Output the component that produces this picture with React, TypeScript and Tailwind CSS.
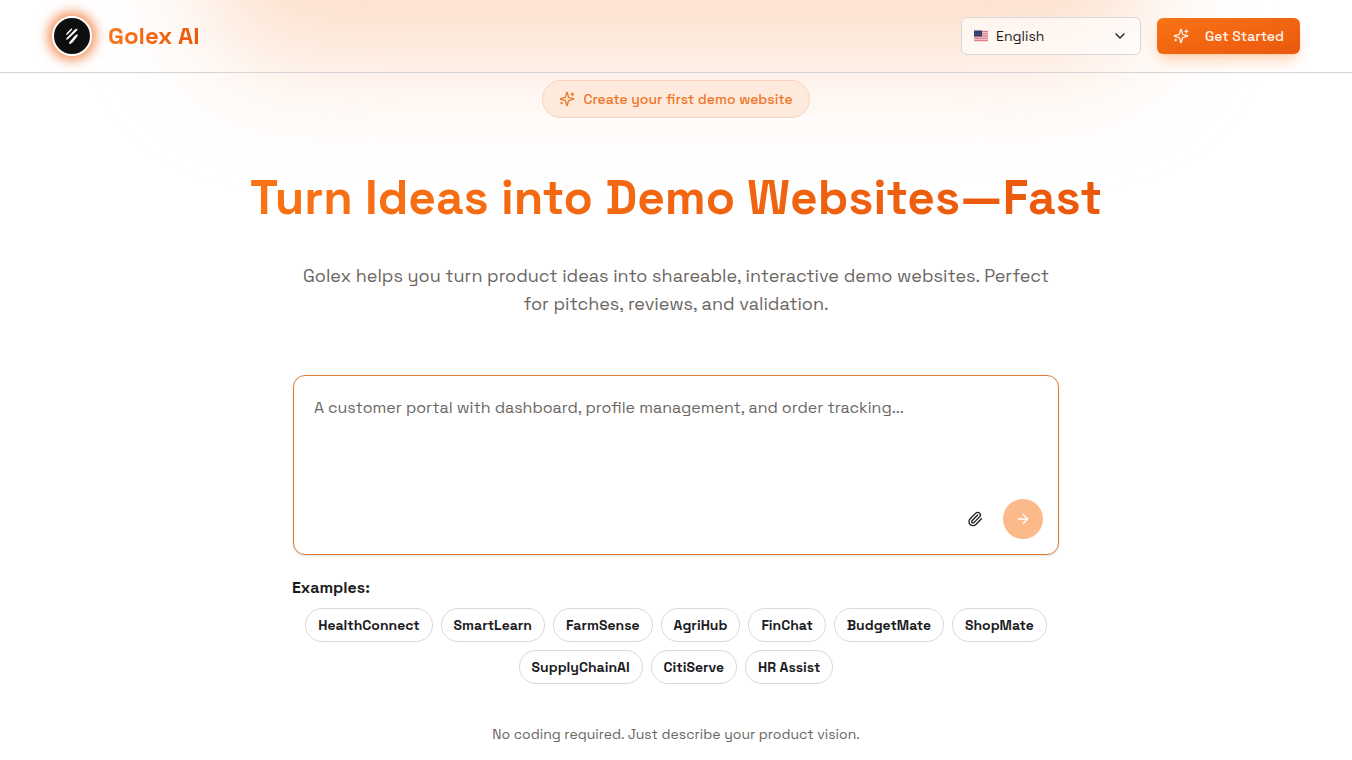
import { useState } from "react";
import { ArrowRight, ChevronDown, Paperclip } from "lucide-react";

const EXAMPLES = [
  "HealthConnect",
  "SmartLearn",
  "FarmSense",
  "AgriHub",
  "FinChat",
  "BudgetMate",
  "ShopMate",
  "SupplyChainAI",
  "CitiServe",
  "HR Assist",
];

function SparkleIcon() {
  return (
    <svg
      className="size-4 shrink-0"
      viewBox="0 0 24 24"
      fill="none"
      stroke="currentColor"
      strokeWidth={2}
      strokeLinecap="round"
      strokeLinejoin="round"
      aria-hidden="true">
      <path d="M9.937 15.5A2 2 0 0 0 8.5 14.063l-6.135-1.582a.5.5 0 0 1 0-.962L8.5 9.936A2 2 0 0 0 9.937 8.5l1.582-6.135a.5.5 0 0 1 .963 0L14.063 8.5A2 2 0 0 0 15.5 9.937l6.135 1.581a.5.5 0 0 1 0 .964L15.5 14.063a2 2 0 0 0-1.437 1.437l-1.582 6.135a.5.5 0 0 1-.963 0z" />
      <path d="M20 3v4M22 5h-4M4 17v2M5 18H3" />
    </svg>
  );
}

function Logo() {
  return (
    <a href="#" className="flex items-center gap-4">
      <span className="flex size-10 items-center justify-center rounded-full border-2 border-white bg-[#0d0f0f] shadow-[0_0_12px_4px_rgba(240,105,30,0.75)]">
        <svg className="size-5 shrink-0" viewBox="0 0 20 20" fill="#fff" aria-hidden="true">
          <path d="M4 8.800c.1-.8.4-1.200.9-1.800l3.300-3.600c.6-.6 1-.8 2-.8-.1.800-.4 1.200-.9 1.800L6 8c-.6.600-1 .8-2 .8z" />
          <path d="M4 13.600c.1-.8.4-1.300.9-1.800l7.500-7.800c.8-.8 1.500-1 3.200-1-.2.900-.5 1.400-1.100 2l-8.200 7.700c-.7.700-1.200.9-2.300.9z" />
          <path d="M7 17.800c.2-1.300.6-1.900 1.300-2.700l4.700-5.400c.8-.9 1.500-1.200 2.900-1.200-.2 1-.5 1.600-1.100 2.400l-3.500 4.600c-1.200 1.600-2.100 2.300-4.300 2.300z" />
        </svg>
      </span>
      <span className="bg-gradient-to-r from-[#f97316] to-[#ea580c] bg-clip-text text-2xl font-bold text-transparent">
        Golex AI
      </span>
    </a>
  );
}

function UsFlag() {
  return (
    <svg className="h-3 w-3.5 shrink-0" viewBox="0 0 14 12" aria-hidden="true">
      <rect y=".5" width="14" height="11" rx=".5" fill="#f3d3d6" />
      <path
        d="M0 1.500h14M0 3.300h14M0 5.100h14M0 6.900h14M0 8.700h14M0 10.600h14"
        stroke="#dd6f7a"
        strokeWidth=".9"
      />
      <rect y=".5" width="8" height="6" fill="#303a6b" />
      <path
        d="M1 2h6M1 3.500h6M1 5h6"
        stroke="#8088ae"
        strokeWidth=".5"
        strokeDasharray=".6 1.200"
      />
    </svg>
  );
}

function Header() {
  return (
    <header className="relative border-b border-[#d4d4d8]">
      <div className="mx-auto flex h-18 max-w-7xl items-center justify-between px-4">
        <Logo />
        <div className="flex items-center gap-4">
          <div className="flex h-9.5 w-45 items-center rounded-md border border-[#d9d7d8] bg-white/60 px-3">
            <UsFlag />
            <select
              aria-label="Language"
              defaultValue="en"
              className="w-full appearance-none bg-transparent pl-2 text-sm text-[#1c1c1f] outline-none">
              <option value="en">English</option>
            </select>
            <ChevronDown className="pointer-events-none size-4 shrink-0 text-[#1c1c1f]" />
          </div>
          <button
            type="button"
            className="flex h-9 items-center gap-4 rounded-md bg-gradient-to-br from-[#f97316] to-[#ea580c] px-4 text-sm font-medium text-[#fff3ea] shadow-lg shadow-orange-500/25">
            <SparkleIcon />
            Get Started
          </button>
        </div>
      </div>
    </header>
  );
}

function PromptBox() {
  const [prompt, setPrompt] = useState("");

  return (
    <form
      className="mx-px flex h-45 flex-col rounded-xl border border-[#e07b35] bg-white shadow-sm"
      onSubmit={(e) => e.preventDefault()}>
      <textarea
        aria-label="Describe your product"
        value={prompt}
        onChange={(e) => setPrompt(e.target.value)}
        placeholder="A customer portal with dashboard, profile management, and order tracking..."
        className="w-full flex-1 resize-none bg-transparent px-5 pt-5 text-base text-[#1c1c1f] outline-none placeholder:text-[#6b6663]"
      />
      <div className="flex items-center justify-end gap-2 p-[15px]">
        <button
          type="button"
          aria-label="Attach file"
          className="flex size-10 items-center justify-center text-[#1c1c1f]">
          <Paperclip className="size-4" />
        </button>
        <button
          type="submit"
          aria-label="Send"
          className="flex size-10 items-center justify-center rounded-full bg-[#fcb98a] text-white">
          <ArrowRight className="size-4" />
        </button>
      </div>
    </form>
  );
}

export default function App() {
  return (
    <div className="relative min-h-screen overflow-hidden bg-white font-['Space_Grotesk','Inter',sans-serif]">
      {/* Warm glow behind the header */}
      <div className="pointer-events-none absolute inset-x-0 -top-40 mx-auto h-56 w-[70%] rounded-b-[80px] bg-[#fddfcb] blur-[54px]" />

      <Header />

      <main className="relative mx-auto flex max-w-4xl flex-col items-center pt-[7px]">
        <div className="flex h-9.5 items-center gap-2 rounded-full border border-[#f9d3ba] bg-[#feeadd] px-4 text-sm font-medium text-[#ee7628]">
          <SparkleIcon />
          Create your first demo website
        </div>

        <h1 className="mt-[50px] bg-gradient-to-r from-[#f97316] to-[#ea580c] bg-clip-text text-center text-5xl leading-[60px] font-bold text-transparent">
          Turn Ideas into Demo Websites—Fast
        </h1>

        <p className="mt-[34px] max-w-3xl text-center text-lg leading-7 text-[#6b6663]">
          Golex helps you turn product ideas into shareable, interactive demo
          websites. Perfect for pitches, reviews, and validation.
        </p>

        <section className="mt-[57px] w-full max-w-3xl">
          <PromptBox />

          <h2 className="mt-[21px] text-base font-semibold text-[#1c1c1f]">
            Examples:
          </h2>
          <div className="mt-2 flex flex-wrap justify-center gap-2">
            {EXAMPLES.map((name) => (
              <button
                key={name}
                type="button"
                className="h-8.5 rounded-full border border-[#d9d9db] bg-white px-3 text-sm font-semibold text-[#1c1c1f]">
                {name}
              </button>
            ))}
          </div>
        </section>

        <p className="mt-10 text-sm text-[#6b6663]">
          No coding required. Just describe your product vision.
        </p>
      </main>
    </div>
  );
}
